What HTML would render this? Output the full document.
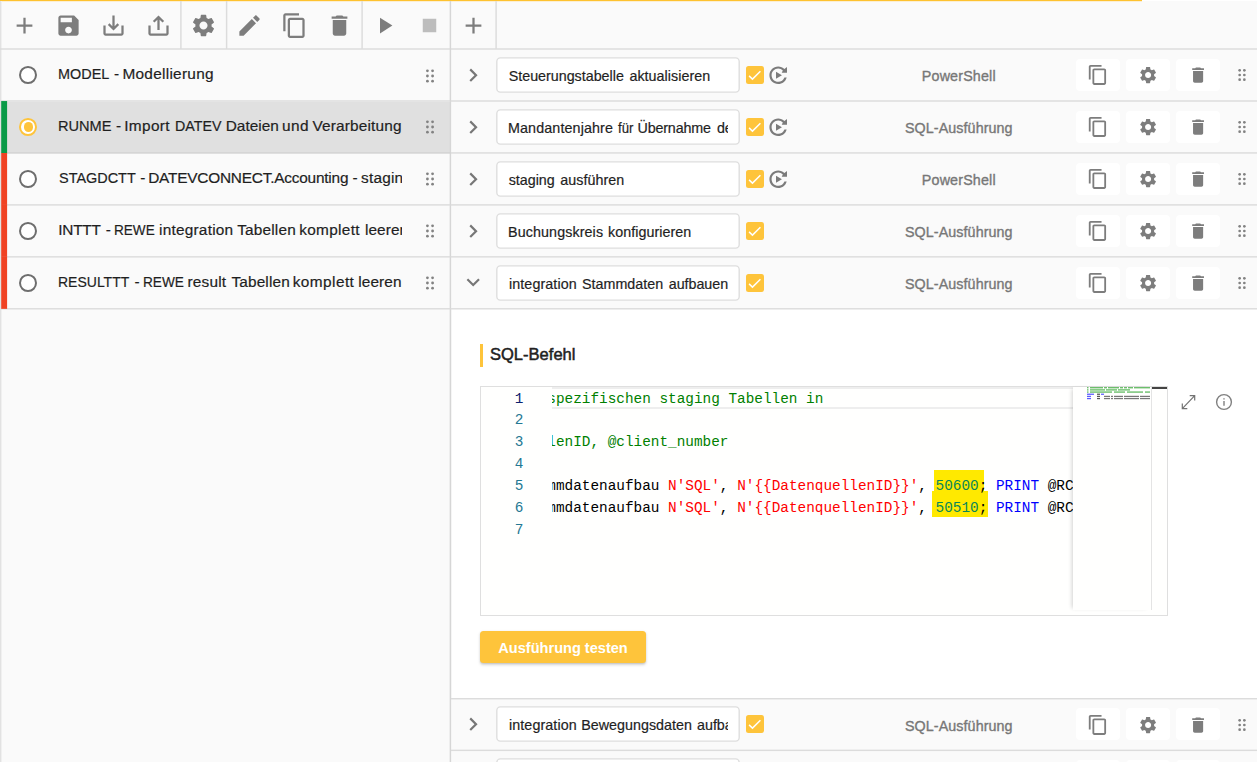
<!DOCTYPE html>
<html lang="de"><head><meta charset="utf-8"><title>Prozesse</title>
<style>
html,body{margin:0;padding:0}
body{width:1257px;height:762px;overflow:hidden;background:#fafafa;position:relative;font-family:"Liberation Sans",sans-serif;}
.a{position:absolute}
.ic{position:absolute;display:block}
.t{position:absolute;white-space:pre}
.w{position:absolute;top:0;white-space:pre;transform-origin:0 0}
.hl{position:absolute;height:1px;background:#e2e2e2}
.vl{position:absolute;width:1px;background:#dcdcdc}
.inp{position:absolute;box-sizing:border-box;border:1px solid #e0e0e0;border-radius:4px;background:#fff}
.btn{position:absolute;background:#fff;border-radius:4px}
.radio{position:absolute;box-sizing:border-box;border-radius:50%}
.cb{position:absolute;background:#fec43b;border-radius:2.5px}
.code{position:absolute;white-space:pre;font-family:"Liberation Mono",monospace;font-size:14.38px;line-height:22px;height:22px}
.ln{position:absolute;font-family:"Liberation Mono",monospace;font-size:14.38px;line-height:22px;height:22px;width:30px;text-align:right;color:#237893}
</style></head><body>

<div class="a" style="left:0;top:0;width:1141.6px;height:1px;background:#fec22f"></div>
<div class="a" style="left:0;top:1px;width:1141.6px;height:1px;background:#fcefd2"></div>
<div class="a" style="left:1141.6px;top:0;width:116px;height:1px;background:#fff"></div>
<div class="a" style="left:0;top:1px;width:1px;height:761px;background:#e2e2e2"></div><div class="a" style="left:1px;top:1px;width:1px;height:761px;background:#f0f0f0"></div>
<svg class="ic" style="left:10.50px;top:11.75px;width:27px;height:27px" viewBox="0 0 24 24"><path fill="#7d7d7d" d="M19 13h-6v6h-2v-6H5v-2h6V5h2v6h6v2z"/></svg>
<svg class="ic" style="left:55.30px;top:11.75px;width:27px;height:27px" viewBox="0 0 24 24"><path fill="#7d7d7d" d="M17 3H5c-1.11 0-2 .9-2 2v14c0 1.1.89 2 2 2h14c1.1 0 2-.9 2-2V7l-4-4zm-5 16c-1.66 0-3-1.34-3-3s1.34-3 3-3 3 1.34 3 3-1.34 3-3 3zm3-10H5V5h10v4z"/></svg>
<svg class="ic" style="left:99.50px;top:11.75px;width:27px;height:27px" viewBox="0 0 24 24"><path fill="#7d7d7d" d="M19 12v7H5v-7H3v7c0 1.1.9 2 2 2h14c1.1 0 2-.9 2-2v-7h-2zm-6 .67l2.59-2.58L17 11.5l-5 5-5-5 1.41-1.41L11 12.67V3h2z"/></svg>
<svg class="ic" style="left:144.50px;top:11.75px;width:27px;height:27px" viewBox="0 0 24 24"><path fill="#7d7d7d" d="M19 12v7H5v-7H3v7c0 1.1.9 2 2 2h14c1.1 0 2-.9 2-2v-7h-2zM11 6.83V16h2V6.83l2.59 2.58L17 8l-5-5-5 5 1.41 1.41z"/></svg>
<svg class="ic" style="left:190.20px;top:11.75px;width:27px;height:27px" viewBox="0 0 24 24"><path fill="#7d7d7d" d="M19.14 12.94c.04-.3.06-.61.06-.94 0-.32-.02-.64-.07-.94l2.03-1.58c.18-.14.23-.41.12-.61l-1.92-3.32c-.12-.22-.37-.29-.59-.22l-2.39.96c-.5-.38-1.03-.7-1.62-.94l-.36-2.54c-.04-.24-.24-.41-.48-.41h-3.84c-.24 0-.43.17-.47.41l-.36 2.54c-.59.24-1.13.57-1.62.94l-2.39-.96c-.22-.08-.47 0-.59.22L2.74 8.87c-.12.21-.08.47.12.61l2.03 1.58c-.05.3-.09.63-.09.94s.02.64.07.94l-2.03 1.58c-.18.14-.23.41-.12.61l1.92 3.32c.12.22.37.29.59.22l2.39-.96c.5.38 1.03.7 1.62.94l.36 2.54c.05.24.24.41.48.41h3.84c.24 0 .44-.17.47-.41l.36-2.54c.59-.24 1.13-.56 1.62-.94l2.39.96c.22.08.47 0 .59-.22l1.92-3.32c.12-.22.07-.47-.12-.61l-2.01-1.58zM12 15.6c-1.98 0-3.6-1.62-3.6-3.6s1.62-3.6 3.6-3.6 3.6 1.62 3.6 3.6-1.62 3.6-3.6 3.6z"/></svg>
<svg class="ic" style="left:235.50px;top:11.75px;width:27px;height:27px" viewBox="0 0 24 24"><path fill="#7d7d7d" d="M3 17.25V21h3.75L17.81 9.94l-3.75-3.75L3 17.25zM20.71 7.04c.39-.39.39-1.02 0-1.41l-2.34-2.34c-.39-.39-1.02-.39-1.41 0l-1.83 1.83 3.75 3.75 1.83-1.83z"/></svg>
<svg class="ic" style="left:280.50px;top:11.75px;width:27px;height:27px" viewBox="0 0 24 24"><path fill="#7d7d7d" d="M16 1H4c-1.1 0-2 .9-2 2v14h2V3h12V1zm3 4H8c-1.1 0-2 .9-2 2v14c0 1.1.9 2 2 2h11c1.1 0 2-.9 2-2V7c0-1.1-.9-2-2-2zm0 16H8V7h11v14z"/></svg>
<svg class="ic" style="left:325.80px;top:11.75px;width:27px;height:27px" viewBox="0 0 24 24"><path fill="#7d7d7d" d="M6 19c0 1.1.9 2 2 2h8c1.1 0 2-.9 2-2V7H6v12zM19 4h-3.5l-1-1h-5l-1 1H5v2h14V4z"/></svg>
<svg class="ic" style="left:371.00px;top:11.75px;width:27px;height:27px" viewBox="0 0 24 24"><path fill="#7d7d7d" d="M8 5v14l11-7z"/></svg>
<svg class="ic" style="left:416.00px;top:11.75px;width:27px;height:27px" viewBox="0 0 24 24"><path fill="#bdbdbd" d="M6 6h12v12H6z"/></svg>
<svg class="ic" style="left:459.70px;top:11.75px;width:27px;height:27px" viewBox="0 0 24 24"><path fill="#7d7d7d" d="M19 13h-6v6h-2v-6H5v-2h6V5h2v6h6v2z"/></svg>
<div class="radio" style="left:19.4px;top:66.12px;width:17.8px;height:17.8px;border:2.35px solid #6e6e6e;background:#fff"></div>
<div id="l1" class="t" style="left:0;top:62.025000000000006px;height:24px;line-height:24px;font-size:15.4px;color:#1f1f1f;width:402px;overflow:hidden;-webkit-text-stroke:0.2px #1f1f1f;"><span class="w" style="left:58.06px;letter-spacing:0.000px;transform:scaleX(0.9378)">MODEL </span><span class="w" style="left:114.00px;letter-spacing:0.000px">- </span><span class="w" style="left:122.45px;letter-spacing:0.272px">Modellierung</span></div>
<svg class="ic" style="left:424.85px;top:66.53px;width:10px;height:18px" viewBox="0 0 10 18" fill="#828282"><circle cx="2.42" cy="3.85" r="1.4"/><circle cx="2.42" cy="9.00" r="1.4"/><circle cx="2.42" cy="14.15" r="1.4"/><circle cx="7.58" cy="3.85" r="1.4"/><circle cx="7.58" cy="9.00" r="1.4"/><circle cx="7.58" cy="14.15" r="1.4"/></svg>
<div class="a" style="left:1.5px;top:101.50px;width:449px;height:51.95px;background:#e0e0e0"></div>
<div class="radio" style="left:19.4px;top:118.07px;width:17.8px;height:17.8px;border:2.35px solid #fec43b;background:#fff"></div>
<div class="radio" style="left:23.70px;top:122.38px;width:9.2px;height:9.2px;background:#fec43b"></div>
<div id="l2" class="t" style="left:0;top:113.975px;height:24px;line-height:24px;font-size:15.4px;color:#1f1f1f;width:402px;overflow:hidden;-webkit-text-stroke:0.2px #1f1f1f;"><span class="w" style="left:58.35px;letter-spacing:0.000px;transform:scaleX(0.9481)">RUNME </span><span class="w" style="left:115.90px;letter-spacing:0.000px">- </span><span class="w" style="left:124.20px;letter-spacing:0.352px">Import </span><span class="w" style="left:174.67px;letter-spacing:0.000px;transform:scaleX(0.9258)">DATEV </span><span class="w" style="left:225.70px;letter-spacing:0.019px">Dateien </span><span class="w" style="left:282.00px;letter-spacing:0.440px">und </span><span class="w" style="left:312.40px;letter-spacing:0.162px">Verarbeitung</span></div>
<svg class="ic" style="left:424.85px;top:118.47px;width:10px;height:18px" viewBox="0 0 10 18" fill="#828282"><circle cx="2.42" cy="3.85" r="1.4"/><circle cx="2.42" cy="9.00" r="1.4"/><circle cx="2.42" cy="14.15" r="1.4"/><circle cx="7.58" cy="3.85" r="1.4"/><circle cx="7.58" cy="9.00" r="1.4"/><circle cx="7.58" cy="14.15" r="1.4"/></svg>
<div class="radio" style="left:19.4px;top:170.02px;width:17.8px;height:17.8px;border:2.35px solid #6e6e6e;background:#fff"></div>
<div id="l3" class="t" style="left:0;top:165.92499999999998px;height:24px;line-height:24px;font-size:15.4px;color:#1f1f1f;width:402px;overflow:hidden;-webkit-text-stroke:0.2px #1f1f1f;"><span class="w" style="left:58.60px;letter-spacing:0.000px;transform:scaleX(0.9382)">STAGDCTT </span><span class="w" style="left:140.20px;letter-spacing:0.000px">- </span><span class="w" style="left:148.20px;letter-spacing:-0.215px">DATEVCONNECT.Accounting </span><span class="w" style="left:352.50px;letter-spacing:0.000px">- </span><span class="w" style="left:361.00px;letter-spacing:0.218px">staging </span><span class="w" style="left:420.00px;letter-spacing:0.000px">Tabellen </span><span class="w" style="left:479.00px;letter-spacing:0.000px">komplett </span><span class="w" style="left:544.00px;letter-spacing:0.000px">leeren</span></div>
<svg class="ic" style="left:424.85px;top:170.42px;width:10px;height:18px" viewBox="0 0 10 18" fill="#828282"><circle cx="2.42" cy="3.85" r="1.4"/><circle cx="2.42" cy="9.00" r="1.4"/><circle cx="2.42" cy="14.15" r="1.4"/><circle cx="7.58" cy="3.85" r="1.4"/><circle cx="7.58" cy="9.00" r="1.4"/><circle cx="7.58" cy="14.15" r="1.4"/></svg>
<div class="radio" style="left:19.4px;top:221.98px;width:17.8px;height:17.8px;border:2.35px solid #6e6e6e;background:#fff"></div>
<div id="l4" class="t" style="left:0;top:217.87500000000003px;height:24px;line-height:24px;font-size:15.4px;color:#1f1f1f;width:402px;overflow:hidden;-webkit-text-stroke:0.2px #1f1f1f;"><span class="w" style="left:58.30px;letter-spacing:-0.248px">INTTT </span><span class="w" style="left:105.80px;letter-spacing:0.000px">- </span><span class="w" style="left:114.02px;letter-spacing:0.000px;transform:scaleX(0.8818)">REWE </span><span class="w" style="left:159.00px;letter-spacing:0.229px">integration </span><span class="w" style="left:237.20px;letter-spacing:0.176px">Tabellen </span><span class="w" style="left:299.20px;letter-spacing:0.316px">komplett </span><span class="w" style="left:365.00px;letter-spacing:0.055px">leeren</span></div>
<svg class="ic" style="left:424.85px;top:222.38px;width:10px;height:18px" viewBox="0 0 10 18" fill="#828282"><circle cx="2.42" cy="3.85" r="1.4"/><circle cx="2.42" cy="9.00" r="1.4"/><circle cx="2.42" cy="14.15" r="1.4"/><circle cx="7.58" cy="3.85" r="1.4"/><circle cx="7.58" cy="9.00" r="1.4"/><circle cx="7.58" cy="14.15" r="1.4"/></svg>
<div class="radio" style="left:19.4px;top:273.93px;width:17.8px;height:17.8px;border:2.35px solid #6e6e6e;background:#fff"></div>
<div id="l5" class="t" style="left:0;top:269.82500000000005px;height:24px;line-height:24px;font-size:15.4px;color:#1f1f1f;width:402px;overflow:hidden;-webkit-text-stroke:0.2px #1f1f1f;"><span class="w" style="left:58.39px;letter-spacing:0.000px;transform:scaleX(0.9092)">RESULTTT </span><span class="w" style="left:134.50px;letter-spacing:0.000px">- </span><span class="w" style="left:142.91px;letter-spacing:0.000px;transform:scaleX(0.8863)">REWE </span><span class="w" style="left:187.50px;letter-spacing:0.188px">result </span><span class="w" style="left:231.40px;letter-spacing:0.147px">Tabellen </span><span class="w" style="left:292.70px;letter-spacing:0.430px">komplett </span><span class="w" style="left:358.30px;letter-spacing:0.075px">leeren</span></div>
<svg class="ic" style="left:424.85px;top:274.33px;width:10px;height:18px" viewBox="0 0 10 18" fill="#828282"><circle cx="2.42" cy="3.85" r="1.4"/><circle cx="2.42" cy="9.00" r="1.4"/><circle cx="2.42" cy="14.15" r="1.4"/><circle cx="7.58" cy="3.85" r="1.4"/><circle cx="7.58" cy="9.00" r="1.4"/><circle cx="7.58" cy="14.15" r="1.4"/></svg>
<svg class="ic" style="left:460.20px;top:61.83px;width:26.4px;height:26.4px" viewBox="0 0 24 24"><path fill="#777" d="M10 6L8.59 7.41 13.17 12l-4.58 4.59L10 18l6-6z"/></svg>
<svg class="ic" style="left:494px;top:55.03px;width:248px;height:40px" viewBox="0 0 248 40"><rect x="2.8" y="2.85" width="242.4" height="34.3" rx="3.6" fill="#fff" stroke="#dedede" stroke-width="1.4"/></svg>
<div id="r1" class="t" style="left:0;top:63.92500000000001px;height:24px;line-height:24px;font-size:14.3px;color:#1f1f1f;width:728px;overflow:hidden;-webkit-text-stroke:0.2px #1f1f1f;"><span class="w" style="left:508.70px;letter-spacing:-0.006px">Steuerungstabelle </span><span class="w" style="left:629.40px;letter-spacing:0.049px">aktualisieren</span></div>
<div class="cb" style="left:746px;top:66.03px;width:18px;height:18px"></div>
<svg class="ic" style="left:746px;top:66.03px;width:18px;height:18px" viewBox="0 0 24 24"><path fill="none" stroke="#fff" stroke-width="1.95" d="M4.1 13.2l4.5 4.3L19.2 6.9"/></svg>
<svg class="ic" style="left:764.90px;top:61.83px;width:26.4px;height:26.4px" viewBox="0 0 24 24"><path fill="#7b7b7b" d="M17.65 6.35C16.2 4.9 14.21 4 12 4c-4.42 0-7.99 3.58-7.99 8s3.57 8 7.99 8c3.73 0 6.84-2.55 7.73-6h-2.08c-.82 2.33-3.04 4-5.65 4-3.31 0-6-2.69-6-6s2.690-6 6-6c1.66 0 3.140.69 4.22 1.78L15.2 9.8H20V4.6l-2.35 1.75zM10 8.9v6.4l5.4-3.2z"/></svg>
<div id="r1t" class="t " style="left:808.8px;top:64.22500000000001px;height:24px;line-height:24px;font-size:14.3px;color:#777;font-weight:normal;letter-spacing:0.1635px;width:300px;text-align:center;-webkit-text-stroke:0.35px #777;"><span>PowerShell</span></div>
<div class="btn" style="left:1075.8px;top:59.03px;width:44.2px;height:32px"></div>
<svg class="ic" style="left:1086.60px;top:64.33px;width:21.8px;height:21.8px" viewBox="0 0 24 24"><path fill="#7d7d7d" d="M16 1H4c-1.1 0-2 .9-2 2v14h2V3h12V1zm3 4H8c-1.1 0-2 .9-2 2v14c0 1.1.9 2 2 2h11c1.1 0 2-.9 2-2V7c0-1.1-.9-2-2-2zm0 16H8V7h11v14z"/></svg>
<div class="btn" style="left:1126px;top:59.03px;width:44.2px;height:32px"></div>
<svg class="ic" style="left:1138.00px;top:65.23px;width:20.2px;height:20.2px" viewBox="0 0 24 24"><path fill="#7d7d7d" d="M19.14 12.94c.04-.3.06-.61.06-.94 0-.32-.02-.64-.07-.94l2.03-1.58c.18-.14.23-.41.12-.61l-1.92-3.32c-.12-.22-.37-.29-.59-.22l-2.39.96c-.5-.38-1.03-.7-1.62-.94l-.36-2.54c-.04-.24-.24-.41-.48-.41h-3.84c-.24 0-.43.17-.47.41l-.36 2.54c-.59.24-1.13.57-1.62.94l-2.39-.96c-.22-.08-.47 0-.59.22L2.74 8.87c-.12.21-.08.47.12.61l2.03 1.58c-.05.3-.09.63-.09.94s.02.64.07.94l-2.03 1.58c-.18.14-.23.41-.12.61l1.92 3.32c.12.22.37.29.59.22l2.39-.96c.5.38 1.03.7 1.62.94l.36 2.54c.05.24.24.41.48.41h3.84c.24 0 .44-.17.47-.41l.36-2.54c.59-.24 1.13-.56 1.62-.94l2.39.96c.22.08.47 0 .59-.22l1.92-3.32c.12-.22.07-.47-.12-.61l-2.01-1.58zM12 15.6c-1.98 0-3.6-1.62-3.6-3.6s1.62-3.6 3.6-3.6 3.6 1.62 3.6 3.6-1.62 3.6-3.6 3.6z"/></svg>
<div class="btn" style="left:1176.2px;top:59.03px;width:44.2px;height:32px"></div>
<svg class="ic" style="left:1188.20px;top:65.23px;width:20.2px;height:20.2px" viewBox="0 0 24 24"><path fill="#7d7d7d" d="M6 19c0 1.1.9 2 2 2h8c1.1 0 2-.9 2-2V7H6v12zM19 4h-3.5l-1-1h-5l-1 1H5v2h14V4z"/></svg>
<svg class="ic" style="left:1237.00px;top:66.48px;width:10px;height:18px" viewBox="0 0 10 18" fill="#828282"><circle cx="2.65" cy="4.30" r="1.35"/><circle cx="2.65" cy="9.00" r="1.35"/><circle cx="2.65" cy="13.70" r="1.35"/><circle cx="7.35" cy="4.30" r="1.35"/><circle cx="7.35" cy="9.00" r="1.35"/><circle cx="7.35" cy="13.70" r="1.35"/></svg>
<svg class="ic" style="left:460.20px;top:113.77px;width:26.4px;height:26.4px" viewBox="0 0 24 24"><path fill="#777" d="M10 6L8.59 7.41 13.17 12l-4.58 4.59L10 18l6-6z"/></svg>
<svg class="ic" style="left:494px;top:106.97px;width:248px;height:40px" viewBox="0 0 248 40"><rect x="2.8" y="2.85" width="242.4" height="34.3" rx="3.6" fill="#fff" stroke="#dedede" stroke-width="1.4"/></svg>
<div id="r2" class="t" style="left:0;top:115.875px;height:24px;line-height:24px;font-size:14.3px;color:#1f1f1f;width:728px;overflow:hidden;-webkit-text-stroke:0.2px #1f1f1f;"><span class="w" style="left:508.00px;letter-spacing:0.125px">Mandantenjahre </span><span class="w" style="left:617.50px;letter-spacing:0.000px;transform:scaleX(0.9218)">für </span><span class="w" style="left:637.60px;letter-spacing:-0.181px">Übernahme </span><span class="w" style="left:716.90px;letter-spacing:0.000px">definieren</span></div>
<div class="cb" style="left:746px;top:117.97px;width:18px;height:18px"></div>
<svg class="ic" style="left:746px;top:117.97px;width:18px;height:18px" viewBox="0 0 24 24"><path fill="none" stroke="#fff" stroke-width="1.95" d="M4.1 13.2l4.5 4.3L19.2 6.9"/></svg>
<svg class="ic" style="left:764.90px;top:113.77px;width:26.4px;height:26.4px" viewBox="0 0 24 24"><path fill="#7b7b7b" d="M17.65 6.35C16.2 4.9 14.21 4 12 4c-4.42 0-7.99 3.58-7.99 8s3.57 8 7.99 8c3.73 0 6.84-2.55 7.73-6h-2.08c-.82 2.33-3.04 4-5.65 4-3.31 0-6-2.69-6-6s2.690-6 6-6c1.66 0 3.140.69 4.22 1.78L15.2 9.8H20V4.6l-2.35 1.75zM10 8.9v6.4l5.4-3.2z"/></svg>
<div id="r2t" class="t " style="left:808.8px;top:116.17499999999998px;height:24px;line-height:24px;font-size:14.3px;color:#777;font-weight:normal;letter-spacing:0.0846px;width:300px;text-align:center;-webkit-text-stroke:0.35px #777;"><span>SQL-Ausführung</span></div>
<div class="btn" style="left:1075.8px;top:110.97px;width:44.2px;height:32px"></div>
<svg class="ic" style="left:1086.60px;top:116.27px;width:21.8px;height:21.8px" viewBox="0 0 24 24"><path fill="#7d7d7d" d="M16 1H4c-1.1 0-2 .9-2 2v14h2V3h12V1zm3 4H8c-1.1 0-2 .9-2 2v14c0 1.1.9 2 2 2h11c1.1 0 2-.9 2-2V7c0-1.1-.9-2-2-2zm0 16H8V7h11v14z"/></svg>
<div class="btn" style="left:1126px;top:110.97px;width:44.2px;height:32px"></div>
<svg class="ic" style="left:1138.00px;top:117.17px;width:20.2px;height:20.2px" viewBox="0 0 24 24"><path fill="#7d7d7d" d="M19.14 12.94c.04-.3.06-.61.06-.94 0-.32-.02-.64-.07-.94l2.03-1.58c.18-.14.23-.41.12-.61l-1.92-3.32c-.12-.22-.37-.29-.59-.22l-2.39.96c-.5-.38-1.03-.7-1.62-.94l-.36-2.54c-.04-.24-.24-.41-.48-.41h-3.84c-.24 0-.43.17-.47.41l-.36 2.54c-.59.24-1.13.57-1.62.94l-2.39-.96c-.22-.08-.47 0-.59.22L2.74 8.87c-.12.21-.08.47.12.61l2.03 1.58c-.05.3-.09.63-.09.94s.02.64.07.94l-2.03 1.58c-.18.14-.23.41-.12.61l1.92 3.32c.12.22.37.29.59.22l2.39-.96c.5.38 1.03.7 1.62.94l.36 2.54c.05.24.24.41.48.41h3.84c.24 0 .44-.17.47-.41l.36-2.54c.59-.24 1.13-.56 1.62-.94l2.39.96c.22.08.47 0 .59-.22l1.92-3.32c.12-.22.07-.47-.12-.61l-2.01-1.58zM12 15.6c-1.98 0-3.6-1.62-3.6-3.6s1.62-3.6 3.6-3.6 3.6 1.62 3.6 3.6-1.62 3.6-3.6 3.6z"/></svg>
<div class="btn" style="left:1176.2px;top:110.97px;width:44.2px;height:32px"></div>
<svg class="ic" style="left:1188.20px;top:117.17px;width:20.2px;height:20.2px" viewBox="0 0 24 24"><path fill="#7d7d7d" d="M6 19c0 1.1.9 2 2 2h8c1.1 0 2-.9 2-2V7H6v12zM19 4h-3.5l-1-1h-5l-1 1H5v2h14V4z"/></svg>
<svg class="ic" style="left:1237.00px;top:118.42px;width:10px;height:18px" viewBox="0 0 10 18" fill="#828282"><circle cx="2.65" cy="4.30" r="1.35"/><circle cx="2.65" cy="9.00" r="1.35"/><circle cx="2.65" cy="13.70" r="1.35"/><circle cx="7.35" cy="4.30" r="1.35"/><circle cx="7.35" cy="9.00" r="1.35"/><circle cx="7.35" cy="13.70" r="1.35"/></svg>
<svg class="ic" style="left:460.20px;top:165.72px;width:26.4px;height:26.4px" viewBox="0 0 24 24"><path fill="#777" d="M10 6L8.59 7.41 13.17 12l-4.58 4.59L10 18l6-6z"/></svg>
<svg class="ic" style="left:494px;top:158.92px;width:248px;height:40px" viewBox="0 0 248 40"><rect x="2.8" y="2.85" width="242.4" height="34.3" rx="3.6" fill="#fff" stroke="#dedede" stroke-width="1.4"/></svg>
<div id="r3" class="t" style="left:0;top:167.825px;height:24px;line-height:24px;font-size:14.3px;color:#1f1f1f;width:728px;overflow:hidden;-webkit-text-stroke:0.2px #1f1f1f;"><span class="w" style="left:508.70px;letter-spacing:-0.008px">staging </span><span class="w" style="left:560.30px;letter-spacing:0.045px">ausführen</span></div>
<div class="cb" style="left:746px;top:169.92px;width:18px;height:18px"></div>
<svg class="ic" style="left:746px;top:169.92px;width:18px;height:18px" viewBox="0 0 24 24"><path fill="none" stroke="#fff" stroke-width="1.95" d="M4.1 13.2l4.5 4.3L19.2 6.9"/></svg>
<svg class="ic" style="left:764.90px;top:165.72px;width:26.4px;height:26.4px" viewBox="0 0 24 24"><path fill="#7b7b7b" d="M17.65 6.35C16.2 4.9 14.21 4 12 4c-4.42 0-7.99 3.58-7.99 8s3.57 8 7.99 8c3.73 0 6.84-2.55 7.73-6h-2.08c-.82 2.33-3.04 4-5.65 4-3.31 0-6-2.69-6-6s2.690-6 6-6c1.66 0 3.140.69 4.22 1.78L15.2 9.8H20V4.6l-2.35 1.75zM10 8.9v6.4l5.4-3.2z"/></svg>
<div id="r3t" class="t " style="left:808.8px;top:168.12499999999997px;height:24px;line-height:24px;font-size:14.3px;color:#777;font-weight:normal;letter-spacing:0.1635px;width:300px;text-align:center;-webkit-text-stroke:0.35px #777;"><span>PowerShell</span></div>
<div class="btn" style="left:1075.8px;top:162.92px;width:44.2px;height:32px"></div>
<svg class="ic" style="left:1086.60px;top:168.22px;width:21.8px;height:21.8px" viewBox="0 0 24 24"><path fill="#7d7d7d" d="M16 1H4c-1.1 0-2 .9-2 2v14h2V3h12V1zm3 4H8c-1.1 0-2 .9-2 2v14c0 1.1.9 2 2 2h11c1.1 0 2-.9 2-2V7c0-1.1-.9-2-2-2zm0 16H8V7h11v14z"/></svg>
<div class="btn" style="left:1126px;top:162.92px;width:44.2px;height:32px"></div>
<svg class="ic" style="left:1138.00px;top:169.12px;width:20.2px;height:20.2px" viewBox="0 0 24 24"><path fill="#7d7d7d" d="M19.14 12.94c.04-.3.06-.61.06-.94 0-.32-.02-.64-.07-.94l2.03-1.58c.18-.14.23-.41.12-.61l-1.92-3.32c-.12-.22-.37-.29-.59-.22l-2.39.96c-.5-.38-1.03-.7-1.62-.94l-.36-2.54c-.04-.24-.24-.41-.48-.41h-3.84c-.24 0-.43.17-.47.41l-.36 2.54c-.59.24-1.13.57-1.62.94l-2.39-.96c-.22-.08-.47 0-.59.22L2.74 8.87c-.12.21-.08.47.12.61l2.03 1.58c-.05.3-.09.63-.09.94s.02.64.07.94l-2.03 1.58c-.18.14-.23.41-.12.61l1.92 3.32c.12.22.37.29.59.22l2.39-.96c.5.38 1.03.7 1.62.94l.36 2.54c.05.24.24.41.48.41h3.84c.24 0 .44-.17.47-.41l.36-2.54c.59-.24 1.13-.56 1.62-.94l2.39.96c.22.08.47 0 .59-.22l1.92-3.32c.12-.22.07-.47-.12-.61l-2.01-1.58zM12 15.6c-1.98 0-3.6-1.62-3.6-3.6s1.62-3.6 3.6-3.6 3.6 1.62 3.6 3.6-1.62 3.6-3.6 3.6z"/></svg>
<div class="btn" style="left:1176.2px;top:162.92px;width:44.2px;height:32px"></div>
<svg class="ic" style="left:1188.20px;top:169.12px;width:20.2px;height:20.2px" viewBox="0 0 24 24"><path fill="#7d7d7d" d="M6 19c0 1.1.9 2 2 2h8c1.1 0 2-.9 2-2V7H6v12zM19 4h-3.5l-1-1h-5l-1 1H5v2h14V4z"/></svg>
<svg class="ic" style="left:1237.00px;top:170.37px;width:10px;height:18px" viewBox="0 0 10 18" fill="#828282"><circle cx="2.65" cy="4.30" r="1.35"/><circle cx="2.65" cy="9.00" r="1.35"/><circle cx="2.65" cy="13.70" r="1.35"/><circle cx="7.35" cy="4.30" r="1.35"/><circle cx="7.35" cy="9.00" r="1.35"/><circle cx="7.35" cy="13.70" r="1.35"/></svg>
<svg class="ic" style="left:460.20px;top:217.68px;width:26.4px;height:26.4px" viewBox="0 0 24 24"><path fill="#777" d="M10 6L8.59 7.41 13.17 12l-4.58 4.59L10 18l6-6z"/></svg>
<svg class="ic" style="left:494px;top:210.88px;width:248px;height:40px" viewBox="0 0 248 40"><rect x="2.8" y="2.85" width="242.4" height="34.3" rx="3.6" fill="#fff" stroke="#dedede" stroke-width="1.4"/></svg>
<div id="r4" class="t" style="left:0;top:219.77500000000003px;height:24px;line-height:24px;font-size:14.3px;color:#1f1f1f;width:728px;overflow:hidden;-webkit-text-stroke:0.2px #1f1f1f;"><span class="w" style="left:508.00px;letter-spacing:0.106px">Buchungskreis </span><span class="w" style="left:608.00px;letter-spacing:0.050px">konfigurieren</span></div>
<div class="cb" style="left:746px;top:221.88px;width:18px;height:18px"></div>
<svg class="ic" style="left:746px;top:221.88px;width:18px;height:18px" viewBox="0 0 24 24"><path fill="none" stroke="#fff" stroke-width="1.95" d="M4.1 13.2l4.5 4.3L19.2 6.9"/></svg>
<div id="r4t" class="t " style="left:808.8px;top:220.07500000000002px;height:24px;line-height:24px;font-size:14.3px;color:#777;font-weight:normal;letter-spacing:0.0846px;width:300px;text-align:center;-webkit-text-stroke:0.35px #777;"><span>SQL-Ausführung</span></div>
<div class="btn" style="left:1075.8px;top:214.88px;width:44.2px;height:32px"></div>
<svg class="ic" style="left:1086.60px;top:220.18px;width:21.8px;height:21.8px" viewBox="0 0 24 24"><path fill="#7d7d7d" d="M16 1H4c-1.1 0-2 .9-2 2v14h2V3h12V1zm3 4H8c-1.1 0-2 .9-2 2v14c0 1.1.9 2 2 2h11c1.1 0 2-.9 2-2V7c0-1.1-.9-2-2-2zm0 16H8V7h11v14z"/></svg>
<div class="btn" style="left:1126px;top:214.88px;width:44.2px;height:32px"></div>
<svg class="ic" style="left:1138.00px;top:221.08px;width:20.2px;height:20.2px" viewBox="0 0 24 24"><path fill="#7d7d7d" d="M19.14 12.94c.04-.3.06-.61.06-.94 0-.32-.02-.64-.07-.94l2.03-1.58c.18-.14.23-.41.12-.61l-1.92-3.32c-.12-.22-.37-.29-.59-.22l-2.39.96c-.5-.38-1.03-.7-1.62-.94l-.36-2.54c-.04-.24-.24-.41-.48-.41h-3.84c-.24 0-.43.17-.47.41l-.36 2.54c-.59.24-1.13.57-1.62.94l-2.39-.96c-.22-.08-.47 0-.59.22L2.74 8.87c-.12.21-.08.47.12.61l2.03 1.58c-.05.3-.09.63-.09.94s.02.64.07.94l-2.03 1.58c-.18.14-.23.41-.12.61l1.92 3.32c.12.22.37.29.59.22l2.39-.96c.5.38 1.03.7 1.62.94l.36 2.54c.05.24.24.41.48.41h3.84c.24 0 .44-.17.47-.41l.36-2.54c.59-.24 1.13-.56 1.62-.94l2.39.96c.22.08.47 0 .59-.22l1.92-3.32c.12-.22.07-.47-.12-.61l-2.01-1.58zM12 15.6c-1.98 0-3.6-1.62-3.6-3.6s1.62-3.6 3.6-3.6 3.6 1.62 3.6 3.6-1.62 3.6-3.6 3.6z"/></svg>
<div class="btn" style="left:1176.2px;top:214.88px;width:44.2px;height:32px"></div>
<svg class="ic" style="left:1188.20px;top:221.08px;width:20.2px;height:20.2px" viewBox="0 0 24 24"><path fill="#7d7d7d" d="M6 19c0 1.1.9 2 2 2h8c1.1 0 2-.9 2-2V7H6v12zM19 4h-3.5l-1-1h-5l-1 1H5v2h14V4z"/></svg>
<svg class="ic" style="left:1237.00px;top:222.33px;width:10px;height:18px" viewBox="0 0 10 18" fill="#828282"><circle cx="2.65" cy="4.30" r="1.35"/><circle cx="2.65" cy="9.00" r="1.35"/><circle cx="2.65" cy="13.70" r="1.35"/><circle cx="7.35" cy="4.30" r="1.35"/><circle cx="7.35" cy="9.00" r="1.35"/><circle cx="7.35" cy="13.70" r="1.35"/></svg>
<svg class="ic" style="left:460.00px;top:269.23px;width:26.4px;height:26.4px" viewBox="0 0 24 24"><path fill="#777" d="M16.59 8.59L12 13.17 7.41 8.59 6 10l6 6 6-6z"/></svg>
<svg class="ic" style="left:494px;top:262.83px;width:248px;height:40px" viewBox="0 0 248 40"><rect x="2.8" y="2.85" width="242.4" height="34.3" rx="3.6" fill="#fff" stroke="#dedede" stroke-width="1.4"/></svg>
<div id="r5" class="t" style="left:0;top:271.725px;height:24px;line-height:24px;font-size:14.3px;color:#1f1f1f;width:728px;overflow:hidden;-webkit-text-stroke:0.2px #1f1f1f;"><span class="w" style="left:509.00px;letter-spacing:0.089px">integration </span><span class="w" style="left:581.90px;letter-spacing:0.033px">Stammdaten </span><span class="w" style="left:668.80px;letter-spacing:-0.040px">aufbauen</span></div>
<div class="cb" style="left:746px;top:273.83px;width:18px;height:18px"></div>
<svg class="ic" style="left:746px;top:273.83px;width:18px;height:18px" viewBox="0 0 24 24"><path fill="none" stroke="#fff" stroke-width="1.95" d="M4.1 13.2l4.5 4.3L19.2 6.9"/></svg>
<div id="r5t" class="t " style="left:808.8px;top:272.02500000000003px;height:24px;line-height:24px;font-size:14.3px;color:#777;font-weight:normal;letter-spacing:0.0846px;width:300px;text-align:center;-webkit-text-stroke:0.35px #777;"><span>SQL-Ausführung</span></div>
<div class="btn" style="left:1075.8px;top:266.83px;width:44.2px;height:32px"></div>
<svg class="ic" style="left:1086.60px;top:272.13px;width:21.8px;height:21.8px" viewBox="0 0 24 24"><path fill="#7d7d7d" d="M16 1H4c-1.1 0-2 .9-2 2v14h2V3h12V1zm3 4H8c-1.1 0-2 .9-2 2v14c0 1.1.9 2 2 2h11c1.1 0 2-.9 2-2V7c0-1.1-.9-2-2-2zm0 16H8V7h11v14z"/></svg>
<div class="btn" style="left:1126px;top:266.83px;width:44.2px;height:32px"></div>
<svg class="ic" style="left:1138.00px;top:273.03px;width:20.2px;height:20.2px" viewBox="0 0 24 24"><path fill="#7d7d7d" d="M19.14 12.94c.04-.3.06-.61.06-.94 0-.32-.02-.64-.07-.94l2.03-1.58c.18-.14.23-.41.12-.61l-1.92-3.32c-.12-.22-.37-.29-.59-.22l-2.39.96c-.5-.38-1.03-.7-1.62-.94l-.36-2.54c-.04-.24-.24-.41-.48-.41h-3.84c-.24 0-.43.17-.47.41l-.36 2.54c-.59.24-1.13.57-1.62.94l-2.39-.96c-.22-.08-.47 0-.59.22L2.74 8.87c-.12.21-.08.47.12.61l2.03 1.58c-.05.3-.09.63-.09.94s.02.64.07.94l-2.03 1.58c-.18.14-.23.41-.12.61l1.92 3.32c.12.22.37.29.59.22l2.39-.96c.5.38 1.03.7 1.62.94l.36 2.54c.05.24.24.41.48.41h3.84c.24 0 .44-.17.47-.41l.36-2.54c.59-.24 1.13-.56 1.62-.94l2.39.96c.22.08.47 0 .59-.22l1.92-3.32c.12-.22.07-.47-.12-.61l-2.01-1.58zM12 15.6c-1.98 0-3.6-1.62-3.6-3.6s1.62-3.6 3.6-3.6 3.6 1.62 3.6 3.6-1.62 3.6-3.6 3.6z"/></svg>
<div class="btn" style="left:1176.2px;top:266.83px;width:44.2px;height:32px"></div>
<svg class="ic" style="left:1188.20px;top:273.03px;width:20.2px;height:20.2px" viewBox="0 0 24 24"><path fill="#7d7d7d" d="M6 19c0 1.1.9 2 2 2h8c1.1 0 2-.9 2-2V7H6v12zM19 4h-3.5l-1-1h-5l-1 1H5v2h14V4z"/></svg>
<svg class="ic" style="left:1237.00px;top:274.28px;width:10px;height:18px" viewBox="0 0 10 18" fill="#828282"><circle cx="2.65" cy="4.30" r="1.35"/><circle cx="2.65" cy="9.00" r="1.35"/><circle cx="2.65" cy="13.70" r="1.35"/><circle cx="7.35" cy="4.30" r="1.35"/><circle cx="7.35" cy="9.00" r="1.35"/><circle cx="7.35" cy="13.70" r="1.35"/></svg>
<svg class="ic" style="left:460.20px;top:711.17px;width:26.4px;height:26.4px" viewBox="0 0 24 24"><path fill="#777" d="M10 6L8.59 7.41 13.17 12l-4.58 4.59L10 18l6-6z"/></svg>
<svg class="ic" style="left:494px;top:704.38px;width:248px;height:40px" viewBox="0 0 248 40"><rect x="2.8" y="2.85" width="242.4" height="34.3" rx="3.6" fill="#fff" stroke="#dedede" stroke-width="1.4"/></svg>
<div id="r6" class="t" style="left:0;top:713.275px;height:24px;line-height:24px;font-size:14.3px;color:#1f1f1f;width:728px;overflow:hidden;-webkit-text-stroke:0.2px #1f1f1f;"><span class="w" style="left:509.00px;letter-spacing:0.089px">integration </span><span class="w" style="left:581.20px;letter-spacing:0.020px">Bewegungsdaten </span><span class="w" style="left:697.10px;letter-spacing:-0.040px">aufbauen</span></div>
<div class="cb" style="left:746px;top:715.38px;width:18px;height:18px"></div>
<svg class="ic" style="left:746px;top:715.38px;width:18px;height:18px" viewBox="0 0 24 24"><path fill="none" stroke="#fff" stroke-width="1.95" d="M4.1 13.2l4.5 4.3L19.2 6.9"/></svg>
<div id="r6t" class="t " style="left:808.8px;top:713.575px;height:24px;line-height:24px;font-size:14.3px;color:#777;font-weight:normal;letter-spacing:0.0846px;width:300px;text-align:center;-webkit-text-stroke:0.35px #777;"><span>SQL-Ausführung</span></div>
<div class="btn" style="left:1075.8px;top:708.38px;width:44.2px;height:32px"></div>
<svg class="ic" style="left:1086.60px;top:713.68px;width:21.8px;height:21.8px" viewBox="0 0 24 24"><path fill="#7d7d7d" d="M16 1H4c-1.1 0-2 .9-2 2v14h2V3h12V1zm3 4H8c-1.1 0-2 .9-2 2v14c0 1.1.9 2 2 2h11c1.1 0 2-.9 2-2V7c0-1.1-.9-2-2-2zm0 16H8V7h11v14z"/></svg>
<div class="btn" style="left:1126px;top:708.38px;width:44.2px;height:32px"></div>
<svg class="ic" style="left:1138.00px;top:714.57px;width:20.2px;height:20.2px" viewBox="0 0 24 24"><path fill="#7d7d7d" d="M19.14 12.94c.04-.3.06-.61.06-.94 0-.32-.02-.64-.07-.94l2.03-1.58c.18-.14.23-.41.12-.61l-1.92-3.32c-.12-.22-.37-.29-.59-.22l-2.39.96c-.5-.38-1.03-.7-1.62-.94l-.36-2.54c-.04-.24-.24-.41-.48-.41h-3.84c-.24 0-.43.17-.47.41l-.36 2.54c-.59.24-1.13.57-1.62.94l-2.39-.96c-.22-.08-.47 0-.59.22L2.74 8.87c-.12.21-.08.47.12.61l2.03 1.58c-.05.3-.09.63-.09.94s.02.64.07.94l-2.03 1.58c-.18.14-.23.41-.12.61l1.92 3.32c.12.22.37.29.59.22l2.39-.96c.5.38 1.03.7 1.62.94l.36 2.54c.05.24.24.41.48.41h3.84c.24 0 .44-.17.47-.41l.36-2.54c.59-.24 1.13-.56 1.62-.94l2.39.96c.22.08.47 0 .59-.22l1.92-3.32c.12-.22.07-.47-.12-.61l-2.01-1.58zM12 15.6c-1.98 0-3.6-1.62-3.6-3.6s1.62-3.6 3.6-3.6 3.6 1.62 3.6 3.6-1.62 3.6-3.6 3.6z"/></svg>
<div class="btn" style="left:1176.2px;top:708.38px;width:44.2px;height:32px"></div>
<svg class="ic" style="left:1188.20px;top:714.57px;width:20.2px;height:20.2px" viewBox="0 0 24 24"><path fill="#7d7d7d" d="M6 19c0 1.1.9 2 2 2h8c1.1 0 2-.9 2-2V7H6v12zM19 4h-3.5l-1-1h-5l-1 1H5v2h14V4z"/></svg>
<svg class="ic" style="left:1237.00px;top:715.83px;width:10px;height:18px" viewBox="0 0 10 18" fill="#828282"><circle cx="2.65" cy="4.30" r="1.35"/><circle cx="2.65" cy="9.00" r="1.35"/><circle cx="2.65" cy="13.70" r="1.35"/><circle cx="7.35" cy="4.30" r="1.35"/><circle cx="7.35" cy="9.00" r="1.35"/><circle cx="7.35" cy="13.70" r="1.35"/></svg>
<svg class="ic" style="left:460.20px;top:763.12px;width:26.4px;height:26.4px" viewBox="0 0 24 24"><path fill="#777" d="M10 6L8.59 7.41 13.17 12l-4.58 4.59L10 18l6-6z"/></svg>
<svg class="ic" style="left:494px;top:756.33px;width:248px;height:40px" viewBox="0 0 248 40"><rect x="2.8" y="2.85" width="242.4" height="34.3" rx="3.6" fill="#fff" stroke="#dedede" stroke-width="1.4"/></svg>
<div class="cb" style="left:746px;top:767.33px;width:18px;height:18px"></div>
<svg class="ic" style="left:746px;top:767.33px;width:18px;height:18px" viewBox="0 0 24 24"><path fill="none" stroke="#fff" stroke-width="1.95" d="M4.1 13.2l4.5 4.3L19.2 6.9"/></svg>
<div class="btn" style="left:1075.8px;top:760.33px;width:44.2px;height:32px"></div>
<svg class="ic" style="left:1086.60px;top:765.63px;width:21.8px;height:21.8px" viewBox="0 0 24 24"><path fill="#7d7d7d" d="M16 1H4c-1.1 0-2 .9-2 2v14h2V3h12V1zm3 4H8c-1.1 0-2 .9-2 2v14c0 1.1.9 2 2 2h11c1.1 0 2-.9 2-2V7c0-1.1-.9-2-2-2zm0 16H8V7h11v14z"/></svg>
<div class="btn" style="left:1126px;top:760.33px;width:44.2px;height:32px"></div>
<svg class="ic" style="left:1138.00px;top:766.52px;width:20.2px;height:20.2px" viewBox="0 0 24 24"><path fill="#7d7d7d" d="M19.14 12.94c.04-.3.06-.61.06-.94 0-.32-.02-.64-.07-.94l2.03-1.58c.18-.14.23-.41.12-.61l-1.92-3.32c-.12-.22-.37-.29-.59-.22l-2.39.96c-.5-.38-1.03-.7-1.62-.94l-.36-2.54c-.04-.24-.24-.41-.48-.41h-3.84c-.24 0-.43.17-.47.41l-.36 2.54c-.59.24-1.13.57-1.62.94l-2.39-.96c-.22-.08-.47 0-.59.22L2.74 8.87c-.12.21-.08.47.12.61l2.03 1.58c-.05.3-.09.63-.09.94s.02.64.07.94l-2.03 1.58c-.18.14-.23.41-.12.61l1.92 3.32c.12.22.37.29.59.22l2.39-.96c.5.38 1.03.7 1.62.94l.36 2.54c.05.24.24.41.48.41h3.84c.24 0 .44-.17.47-.41l.36-2.54c.59-.24 1.13-.56 1.62-.94l2.39.96c.22.08.47 0 .59-.22l1.92-3.32c.12-.22.07-.47-.12-.61l-2.01-1.58zM12 15.6c-1.98 0-3.6-1.62-3.6-3.6s1.62-3.6 3.6-3.6 3.6 1.62 3.6 3.6-1.62 3.6-3.6 3.6z"/></svg>
<div class="btn" style="left:1176.2px;top:760.33px;width:44.2px;height:32px"></div>
<svg class="ic" style="left:1188.20px;top:766.52px;width:20.2px;height:20.2px" viewBox="0 0 24 24"><path fill="#7d7d7d" d="M6 19c0 1.1.9 2 2 2h8c1.1 0 2-.9 2-2V7H6v12zM19 4h-3.5l-1-1h-5l-1 1H5v2h14V4z"/></svg>
<svg class="ic" style="left:1237.00px;top:767.78px;width:10px;height:18px" viewBox="0 0 10 18" fill="#828282"><circle cx="2.65" cy="4.30" r="1.35"/><circle cx="2.65" cy="9.00" r="1.35"/><circle cx="2.65" cy="13.70" r="1.35"/><circle cx="7.35" cy="4.30" r="1.35"/><circle cx="7.35" cy="9.00" r="1.35"/><circle cx="7.35" cy="13.70" r="1.35"/></svg>
<div class="a" style="left:451.5px;top:309px;width:806px;height:389.5px;background:#fff"></div>
<div class="a" style="left:480px;top:344px;width:3.3px;height:23px;background:#fec43b"></div>
<div id="h1" class="t " style="left:489.9px;top:342.1px;height:24px;line-height:24px;font-size:16.5px;color:#212121;font-weight:normal;letter-spacing:0.0337px;-webkit-text-stroke:0.5px #212121;"><span>SQL-Befehl</span></div>
<div class="a" style="left:480px;top:386px;width:688px;height:230px;box-sizing:border-box;border:1px solid #dfdfdf;background:#fffffe"></div>
<div class="a" style="left:552px;top:386.6px;width:521px;height:22px;box-sizing:border-box;border:2px solid #eeeeee;border-left:0;border-right:0"></div>
<div class="a" style="left:934px;top:469.5px;width:50px;height:22px;background:#ffe900"></div>
<div class="a" style="left:932px;top:491px;width:56px;height:26px;background:#ffe900"></div>
<div class="a" style="left:552px;top:387px;width:521px;height:228px;overflow:hidden">
<div class="code" style="left:-4.7px;top:0.60px;color:#000"><span style="color:#008000">spezifischen staging Tabellen in</span></div>
<div class="code" style="left:-4.7px;top:44.46px;color:#000"><span style="color:#008000">lenID, @client_number</span></div>
<div class="code" style="left:-4.7px;top:88.32px;color:#000">mmdatenaufbau <span style="color:#f00">N'SQL'</span>, <span style="color:#f00">N'{{DatenquellenID}}'</span>, <span style="color:#098658">50600</span>; <span style="color:#00f">PRINT</span> @RC</div>
<div class="code" style="left:-4.7px;top:110.25px;color:#000">mmdatenaufbau <span style="color:#f00">N'SQL'</span>, <span style="color:#f00">N'{{DatenquellenID}}'</span>, <span style="color:#098658">50510</span>; <span style="color:#00f">PRINT</span> @RC</div>
</div>
<div class="ln" style="left:493.5px;top:387.50px;color:#0b216f">1</div>
<div class="ln" style="left:493.5px;top:409.43px;">2</div>
<div class="ln" style="left:493.5px;top:431.36px;">3</div>
<div class="ln" style="left:493.5px;top:453.29px;">4</div>
<div class="ln" style="left:493.5px;top:475.22px;">5</div>
<div class="ln" style="left:493.5px;top:497.15px;">6</div>
<div class="ln" style="left:493.5px;top:519.08px;">7</div>
<div class="a" style="left:1073px;top:387px;width:78px;height:222.6px;background:#fffffe;box-shadow:-3px 0 4px -2px rgba(0,0,0,.18)"></div>
<div class="a" style="left:1151px;top:387px;width:1px;height:222.6px;background:#e4e4e4"></div>
<div class="a" style="left:1152px;top:386.5px;width:15px;height:2.5px;background:#444"></div>
<svg class="ic" style="left:1080px;top:386px;width:71px;height:16px" viewBox="1080 386 71 16">
<rect x="1087" y="387.10" width="1.5" height="1.25" fill="#5cb85c"/>
<rect x="1090" y="387.10" width="13" height="1.25" fill="#5cb85c"/>
<rect x="1104" y="387.10" width="3" height="1.25" fill="#5cb85c"/>
<rect x="1108" y="387.10" width="11" height="1.25" fill="#5cb85c"/>
<rect x="1120" y="387.10" width="3" height="1.25" fill="#5cb85c"/>
<rect x="1124" y="387.10" width="3" height="1.25" fill="#5cb85c"/>
<rect x="1128" y="387.10" width="5" height="1.25" fill="#5cb85c"/>
<rect x="1134" y="387.10" width="16" height="1.25" fill="#5cb85c"/>
<rect x="1087" y="389.27" width="1.5" height="1.25" fill="#5cb85c"/>
<rect x="1090" y="389.27" width="15" height="1.25" fill="#5cb85c"/>
<rect x="1106" y="389.27" width="11" height="1.25" fill="#5cb85c"/>
<rect x="1118" y="389.27" width="12" height="1.25" fill="#5cb85c"/>
<rect x="1087" y="391.44" width="1.5" height="1.25" fill="#5cb85c"/>
<rect x="1090" y="391.44" width="22" height="1.25" fill="#5cb85c"/>
<rect x="1114" y="391.44" width="11" height="1.25" fill="#5cb85c"/>
<rect x="1127" y="391.44" width="16" height="1.25" fill="#5cb85c"/>
<rect x="1145" y="391.44" width="5" height="1.25" fill="#5cb85c"/>
<rect x="1087" y="393.61" width="7" height="1.25" fill="#5a5aff"/>
<rect x="1097" y="393.61" width="3" height="1.25" fill="#555"/>
<rect x="1101" y="393.61" width="3" height="1.25" fill="#5a5aff"/>
<rect x="1087" y="395.78" width="4" height="1.25" fill="#5a5aff"/>
<rect x="1097" y="395.78" width="3" height="1.25" fill="#555"/>
<rect x="1104" y="395.78" width="6" height="1.25" fill="#777"/>
<rect x="1111" y="395.78" width="2" height="1.25" fill="#777"/>
<rect x="1114" y="395.78" width="9" height="1.25" fill="#777"/>
<rect x="1124" y="395.78" width="15" height="1.25" fill="#777"/>
<rect x="1140" y="395.78" width="10" height="1.25" fill="#777"/>
<rect x="1087" y="397.95" width="4" height="1.25" fill="#5a5aff"/>
<rect x="1097" y="397.95" width="3" height="1.25" fill="#555"/>
<rect x="1104" y="397.95" width="6" height="1.25" fill="#777"/>
<rect x="1111" y="397.95" width="2" height="1.25" fill="#777"/>
<rect x="1114" y="397.95" width="9" height="1.25" fill="#777"/>
<rect x="1124" y="397.95" width="15" height="1.25" fill="#777"/>
<rect x="1140" y="397.95" width="10" height="1.25" fill="#777"/>
</svg>
<svg class="ic" style="left:1180px;top:392.5px;width:18px;height:18px" viewBox="0 0 18 18"><path fill="none" stroke="#737373" stroke-width="1.2" d="M2.3 15.6L14.7 2.6M9.7 2.6h5v5M2.3 10.6v5h5"/></svg>
<svg class="ic" style="left:1214.7px;top:393.05px;width:18px;height:18px" viewBox="0 0 18 18"><circle cx="9" cy="9" r="7.4" fill="none" stroke="#808080" stroke-width="1.4"/><path fill="#6c6c6c" d="M8.4 7.9h1.2v4.9H8.4zM8.4 5.2h1.2v1.3H8.4z"/></svg>
<div class="a" style="left:480px;top:631.3px;width:166.3px;height:32px;background:#fec43b;border-radius:3.5px;box-shadow:0 1.5px 3px rgba(0,0,0,.17),0 1px 1.5px rgba(0,0,0,.08)"></div>
<div id="b1" class="t " style="left:498.3px;top:636.0px;height:24px;line-height:24px;font-size:14.6px;color:#fff;font-weight:bold;letter-spacing:-0.0146px;"><span>Ausführung testen</span></div>
<svg class="ic" style="left:0;top:0;width:1257px;height:762px;pointer-events:none" viewBox="0 0 1257 762"><rect x="0" y="48.27" width="1257" height="1.45" fill="#dcdcdc"/><rect x="180.18" y="1" width="1.45" height="48.0" fill="#dcdcdc"/><rect x="225.88" y="1" width="1.45" height="48.0" fill="#dcdcdc"/><rect x="361.38" y="1" width="1.45" height="48.0" fill="#dcdcdc"/><rect x="495.38" y="1" width="1.45" height="48.0" fill="#dcdcdc"/><rect x="449.67" y="1" width="1.45" height="761" fill="#d6d6d6"/><rect x="1" y="100.28" width="449.4" height="1.45" fill="#dcdcdc"/><rect x="1" y="152.22" width="449.4" height="1.45" fill="#d2d2d2"/><rect x="1" y="204.17" width="449.4" height="1.45" fill="#dcdcdc"/><rect x="1" y="256.12" width="449.4" height="1.45" fill="#dcdcdc"/><rect x="1" y="308.07" width="449.4" height="1.45" fill="#dcdcdc"/><rect x="451" y="100.28" width="806" height="1.45" fill="#dcdcdc"/><rect x="451" y="152.22" width="806" height="1.45" fill="#dcdcdc"/><rect x="451" y="204.17" width="806" height="1.45" fill="#dcdcdc"/><rect x="451" y="256.12" width="806" height="1.45" fill="#dcdcdc"/><rect x="451" y="308.07" width="806" height="1.45" fill="#dcdcdc"/><rect x="451" y="749.62" width="806" height="1.45" fill="#dcdcdc"/><rect x="451" y="801.58" width="806" height="1.45" fill="#dcdcdc"/><rect x="451" y="697.98" width="806" height="1.45" fill="#dcdcdc"/><rect x="1.2" y="101.05" width="5.9" height="51.95" fill="#0a9a47"/><rect x="1.2" y="153.00" width="5.9" height="51.95" fill="#f04223"/><rect x="1.2" y="204.95" width="5.9" height="51.95" fill="#f04223"/><rect x="1.2" y="256.90" width="5.9" height="51.95" fill="#f04223"/></svg>
</body></html>
